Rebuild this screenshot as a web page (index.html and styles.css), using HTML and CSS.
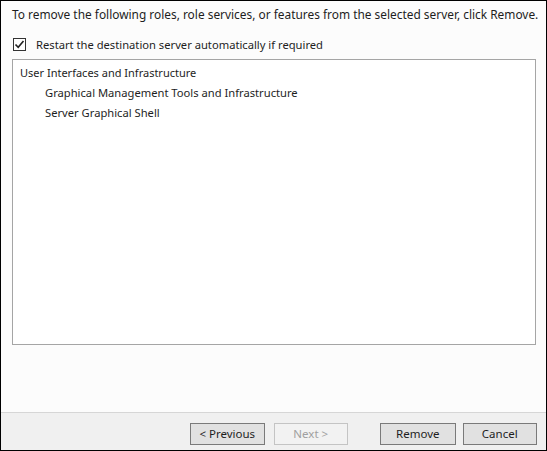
FILE: index.html
```html
<!DOCTYPE html>
<html>
<head>
<meta charset="utf-8">
<link rel="stylesheet" href="styles.css">
</head>
<body>
<div class="window">
  <div class="content">
    <p class="intro">To remove the following roles, role services, or features from the selected server, click Remove.</p>
    <label class="check-row">
      <span class="checkbox"><svg width="11" height="11" viewBox="0 0 11 11"><path d="M1.5 5.5 L4.2 8.3 L9.5 2" fill="none" stroke="#222" stroke-width="1.6"/></svg></span>
      <span>Restart the destination server automatically if required</span>
    </label>
    <div class="listbox">
      <div class="item level0">User Interfaces and Infrastructure</div>
      <div class="item level1">Graphical Management Tools and Infrastructure</div>
      <div class="item level1">Server Graphical Shell</div>
    </div>
  </div>
  <div class="footer">
    <button class="btn">&lt; Previous</button>
    <button class="btn disabled">Next &gt;</button>
    <button class="btn primary-gap">Remove</button>
    <button class="btn">Cancel</button>
  </div>
</div>
</body>
</html>
```
FILE: styles.css
```css
* { box-sizing: border-box; }
html, body { margin: 0; padding: 0; }
body {
  font-family: "Noto Sans", "Open Sans", sans-serif;
  font-size: 11.2px;
  color: #1e1e1e;
  background: #fff;
}
.window {
  width: 547px;
  height: 451px;
  border: 1px solid #000;
  display: flex;
  flex-direction: column;
  background: #fcfcfc;
}
.content {
  flex: 1;
  padding: 5px 10px 0 11px;
  display: flex;
  flex-direction: column;
}
.intro {
  margin: 0;
  font-size: 11.9px;
  line-height: 16px;
  height: 16px;
  white-space: nowrap;
}
.check-row {
  display: flex;
  align-items: center;
  margin-top: 14px;
  height: 16px;
  gap: 10px;
  padding-left: 1px;
}
.checkbox {
  width: 13px;
  height: 13px;
  border: 1px solid #333;
  background: #fff;
  display: flex;
  align-items: center;
  justify-content: center;
}
.listbox {
  margin-top: 7px;
  width: 524px;
  height: 286px;
  border: 1px solid #a5a5a5;
  background: #fff;
  padding: 5px 0 0 7px;
}
.item {
  line-height: 16px;
  white-space: nowrap;
}
.level0 { font-size: 11px; }
.level1 {
  padding-left: 25px;
  margin-top: 4px;
}
.footer {
  height: 38px;
  border-top: 1px solid #d6d6d6;
  background: #f0f0f0;
  display: flex;
  align-items: flex-start;
  padding-top: 10px;
  padding-left: 189px;
}
.btn {
  font-family: inherit;
  font-size: 11.5px;
  color: #1e1e1e;
  height: 22px;
  width: 75px;
  border: 1px solid #7a7a7a;
  background: #e1e1e1;
  padding: 0;
  margin: 0 9px 0 0;
  line-height: 18px;
}
.btn.disabled {
  color: #a0a0a0;
  border-color: #c4c4c4;
  background: #f2f2f2;
  margin-right: 32px;
}
.btn.primary-gap { margin-right: 7px; width: 76px; }
```
